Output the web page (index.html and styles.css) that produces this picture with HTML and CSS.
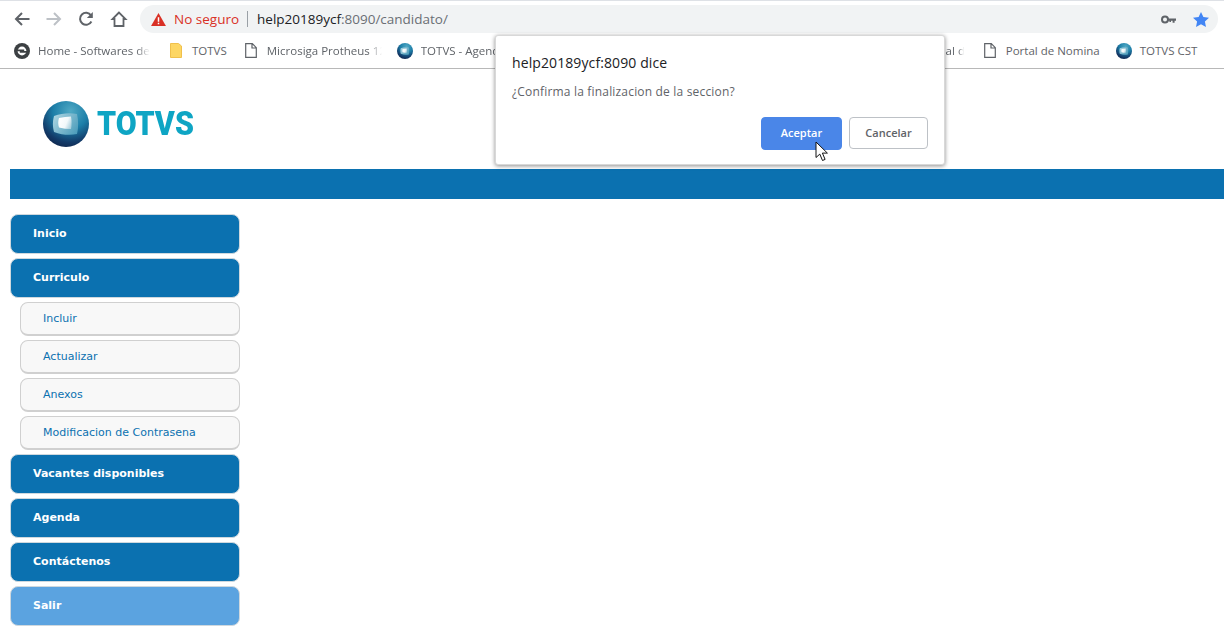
FILE: index.html
```html
<!DOCTYPE html>
<html lang="en">
<head>
    <meta charset="UTF-8">
    <meta name="viewport" content="width=device-width, initial-scale=1.0">
    <title>TOTVS Candidato</title>
    <link rel="stylesheet" href="styles.css">
</head>
<body>

<header class="browser">
    <div class="toolbar">
        <svg class="nav-icon" width="16" height="16" viewBox="0 0 16 16"><path d="M15.500 8H2M8 2 2 8l6 6" fill="none" stroke="#5f6368" stroke-width="2"/></svg>
        <svg class="nav-icon" width="16" height="16" viewBox="0 0 16 16"><path d="M.5 8H14M8 2l6 6-6 6" fill="none" stroke="#bdc1c6" stroke-width="2"/></svg>
        <svg class="nav-icon" width="16" height="16" viewBox="0 0 16 16"><path d="M13.400 10.500A6 6 0 1 1 13 4.400" fill="none" stroke="#5f6368" stroke-width="2"/><path d="M14.800 1v6h-6z" fill="#5f6368"/></svg>
        <svg class="nav-icon" width="18" height="18" viewBox="0 0 18 18"><path d="M9 2.500 2.500 9h2v7h9V9h2z" fill="none" stroke="#5f6368" stroke-width="1.800" stroke-linejoin="miter"/></svg>
        <div class="omnibox">
            <svg width="15" height="13" viewBox="0 0 16 14"><path d="M8 0 16 14H0z" fill="#d93025"/><path d="M7.200 4.500h1.600v5H7.200zM7.200 10.500h1.600v1.600H7.200z" fill="#fff"/></svg>
            <span class="not-secure">No seguro</span>
            <span class="url"><b>help20189ycf</b>:8090/candidato/</span>
            <svg class="key" width="15" height="9" viewBox="0 0 15 9"><circle cx="4" cy="4.500" r="3" fill="none" stroke="#5f6368" stroke-width="2"/><path d="M6 3.500h9v2.200h-1.400v2h-2v-2H10v1.400H8.400V5.700H6z" fill="#5f6368"/></svg>
            <svg width="16" height="15" viewBox="0 0 16 15"><path d="m8 0 2.400 5.100 5.600.7-4.100 3.800 1.100 5.400L8 12.300 3 15l1.100-5.400L0 5.800l5.600-.7z" fill="#4285f4"/></svg>
        </div>
    </div>
    <div class="bookmarks">
        <div class="bookmark">
            <svg class="favicon" width="16" height="16" viewBox="0 0 16 16"><circle cx="8" cy="8" r="8" fill="#3c4043"/><circle cx="8" cy="8" r="4.400" fill="#fff"/><path d="M3 6.400h7.200v1.800H3zM5.800 8H13v1.800H5.800z" fill="#3c4043"/></svg>
            <span class="bookmark-label fade home-label">Home - Softwares de Gestão</span>
        </div>
        <div class="bookmark after-folder">
            <svg class="file" width="12" height="15" viewBox="0 0 12 15"><path d="M.5.5h8l3 2.500v11.500H.5z" fill="#fdd663" stroke="#f0c04c"/></svg>
            <span class="bookmark-label">TOTVS</span>
        </div>
        <div class="bookmark after-protheus">
            <svg class="file" width="12" height="15" viewBox="0 0 12 15"><path d="M.7.7h6.600l4 4v9.600H.7zM7 .7V5h4.300" fill="#fff" stroke="#5f6368" stroke-width="1.200"/></svg>
            <span class="bookmark-label fade protheus-label">Microsiga Protheus 12</span>
        </div>
        <div class="bookmark">
            <svg class="favicon" width="16" height="16" viewBox="0 0 46 46"><use href="#totvs-mark"/></svg>
            <span class="bookmark-label fade agenda-label">TOTVS - Agenda</span>
        </div>
        <div class="bookmark">
            <svg class="file" width="12" height="15" viewBox="0 0 12 15"><path d="M.7.7h6.600l4 4v9.600H.7zM7 .7V5h4.300" fill="#fff" stroke="#5f6368" stroke-width="1.200"/></svg>
            <span class="bookmark-label fade manual-label">Manual de Nomina</span>
        </div>
        <div class="bookmark after-portal">
            <svg class="file" width="12" height="15" viewBox="0 0 12 15"><path d="M.7.7h6.600l4 4v9.600H.7zM7 .7V5h4.300" fill="#fff" stroke="#5f6368" stroke-width="1.200"/></svg>
            <span class="bookmark-label">Portal de Nomina</span>
        </div>
        <div class="bookmark">
            <svg class="favicon" width="16" height="16" viewBox="0 0 46 46"><use href="#totvs-mark"/></svg>
            <span class="bookmark-label">TOTVS CST</span>
        </div>
    </div>
</header>

<svg class="defs" width="0" height="0">
    <defs>
        <radialGradient id="sphere" cx="60%" cy="22%" r="85%">
            <stop offset="0" stop-color="#4fa9c4"/>
            <stop offset="0.45" stop-color="#1c7ea8"/>
            <stop offset="0.8" stop-color="#123a68"/>
            <stop offset="1" stop-color="#0f2348"/>
        </radialGradient>
        <linearGradient id="plate" x1="0" y1="0.2" x2="1" y2="0.8">
            <stop offset="0" stop-color="#a9d3e0"/>
            <stop offset="1" stop-color="#4d9dbb"/>
        </linearGradient>
        <linearGradient id="glass" x1="0" y1="0.3" x2="1" y2="0.7">
            <stop offset="0" stop-color="#ffffff"/>
            <stop offset="0.6" stop-color="#f2f8fa"/>
            <stop offset="1" stop-color="#a8cfdd"/>
        </linearGradient>
        <symbol id="totvs-mark" viewBox="0 0 46 46">
            <circle cx="23" cy="23" r="23" fill="url(#sphere)"/>
            <path d="M11 15c8-3 16-3.500 23-2 1.500 6.500 1.500 14 0 20-7 1.500-15 1-23-2-1.500-5-1.500-11 0-16z" fill="url(#plate)"/>
            <path d="M16 17c4-1 8-1.500 12-1.500.8 4 .8 8 0 12.500-4 0-8-.5-12-1.500-1-3-1-6.500 0-9.500z" fill="url(#glass)"/>
        </symbol>
    </defs>
</svg>

<main class="page-content">
    <div class="logo">
        <svg width="46" height="46" viewBox="0 0 46 46"><use href="#totvs-mark"/></svg>
        <span class="logo-text">TOTVS</span>
    </div>
    <div class="blue-bar"></div>
    <nav class="menu">
        <a class="menu-item">Inicio</a>
        <a class="menu-item">Curriculo</a>
        <a class="sub-item">Incluir</a>
        <a class="sub-item">Actualizar</a>
        <a class="sub-item">Anexos</a>
        <a class="sub-item">Modificacion de Contrasena</a>
        <a class="menu-item">Vacantes disponibles</a>
        <a class="menu-item">Agenda</a>
        <a class="menu-item">Contáctenos</a>
        <a class="menu-item light">Salir</a>
    </nav>
</main>

<div class="dialog">
    <div class="dialog-title">help20189ycf:8090 dice</div>
    <div class="dialog-message">¿Confirma la finalizacion de la seccion?</div>
    <div class="dialog-buttons">
        <button class="btn btn-primary">Aceptar</button>
        <button class="btn">Cancelar</button>
    </div>
    <svg class="cursor" width="14" height="21" viewBox="0 0 14 21"><path d="M1 1v15.500l3.800-3.400 2.700 6.400 2.600-1.100-2.700-6.300h5z" fill="#fff" stroke="#111" stroke-width="1"/></svg>
</div>

</body>
</html>
```

FILE: styles.css
```css
html, body {
    margin: 0;
    height: 626px;
    overflow: hidden;
    background: white;
}
body {
    font-family: "Open Sans", Arial, sans-serif;
    position: relative;
}
.browser {
    height: 68px;
    border-bottom: 1px solid #b8b8b8;
    background: white;
}
.toolbar {
    height: 37px;
    display: flex;
    align-items: center;
    padding-left: 14px;
    box-sizing: border-box;
    border-top: 1px solid #dee1e6;
}
.nav-icon {
    margin-right: 16px;
    flex: none;
}
.omnibox {
    margin-left: -4px;
    margin-right: 6px;
    flex: 1;
    height: 28px;
    border-radius: 14px;
    background: #f1f3f4;
    display: flex;
    align-items: center;
    padding: 0 9px 0 11px;
    font-size: 13.5px;
}
.not-secure {
    color: #d93025;
    margin-left: 8px;
    padding-right: 8px;
    border-right: 1px solid #9aa0a6;
    line-height: 16px;
}
.url {
    color: #6b6f74;
    margin-left: 9px;
    flex: 1;
}
.url b {
    color: #202124;
    font-weight: 400;
}
.key {
    margin-right: 17px;
}
.bookmarks {
    height: 30px;
    box-sizing: border-box;
    padding-bottom: 3px;
    display: flex;
    align-items: center;
    padding-left: 14px;
    font-size: 11.5px;
    color: #5f6368;
}
.bookmark {
    display: flex;
    align-items: center;
    flex: none;
    margin-right: 20px;
}
.bookmark.after-folder {
    margin-right: 18px;
}
.bookmark.after-protheus {
    margin-right: 15px;
}
.bookmark.after-portal {
    margin-right: 16px;
}
.bookmark-label {
    display: block;
    white-space: nowrap;
}
.favicon {
    margin-right: 8px;
}
.file {
    margin-right: 10px;
}
.fade {
    overflow: hidden;
    -webkit-mask-image: linear-gradient(to right, black 88%, transparent);
    mask-image: linear-gradient(to right, black 88%, transparent);
}
.home-label { width: 112px; }
.protheus-label { width: 115px; }
.agenda-label { width: 452px; }
.manual-label { width: 49px; }
.defs {
    position: absolute;
}
.page-content {
    padding-left: 10px;
}
.logo {
    height: 100px;
    display: flex;
    align-items: center;
    padding-left: 33px;
    box-sizing: border-box;
    padding-top: 9px;
}
.logo-text {
    font-family: Roboto, Arial, sans-serif;
    font-weight: 900;
    font-size: 33px;
    color: #0ea5c4;
    margin-left: 8px;
    transform: scaleX(0.92);
    transform-origin: left center;
}
.blue-bar {
    height: 30px;
    background: #0b71b0;
}
.menu {
    width: 230px;
    margin-top: 15px;
    display: flex;
    flex-direction: column;
    gap: 4px;
    font-family: "DejaVu Sans", Verdana, sans-serif;
    font-size: 11px;
}
.menu-item {
    height: 40px;
    box-sizing: border-box;
    line-height: 38px;
    padding-left: 22px;
    background: #0b71b0;
    color: white;
    font-weight: 700;
    border-radius: 8px;
    border: 1px solid #cfd8de;
    display: block;
}
.menu-item.light {
    background: #5ba3e0;
}
.sub-item {
    height: 34px;
    box-sizing: border-box;
    line-height: 32px;
    margin-left: 10px;
    padding-left: 22px;
    background: #f8f8f8;
    color: #0b71b0;
    border: 1px solid #d0d0d0;
    border-bottom-width: 2px;
    border-radius: 8px;
    display: block;
}
.dialog {
    position: absolute;
    left: 495px;
    top: 35px;
    width: 450px;
    height: 130px;
    box-sizing: border-box;
    background: white;
    border: 1px solid #d8d8d8;
    border-radius: 3px;
    box-shadow: 0 1px 4px rgba(0, 0, 0, 0.45);
    padding: 18px 16px 0 16px;
}
.dialog-title {
    font-size: 14px;
    color: #202124;
    line-height: 18px;
    letter-spacing: 0.1px;
}
.dialog-message {
    margin-top: 11px;
    font-size: 12px;
    color: #5f6368;
    line-height: 17px;
    letter-spacing: 0.18px;
}
.dialog-buttons {
    margin-top: 17px;
    display: flex;
    justify-content: flex-end;
    align-items: flex-start;
    gap: 7px;
}
.btn {
    width: 79px;
    height: 32px;
    border: 1px solid #bdc1c6;
    border-radius: 4px;
    background: white;
    color: #5f6368;
    font-family: "Open Sans", Arial, sans-serif;
    font-size: 11px;
    font-weight: 600;
    padding: 0 0 2px;
}
.btn-primary {
    width: 81px;
    height: 33px;
    background: #4a86e8;
    border-color: #4a86e8;
    color: white;
}
.cursor {
    position: absolute;
    left: 319px;
    top: 105px;
}
```
